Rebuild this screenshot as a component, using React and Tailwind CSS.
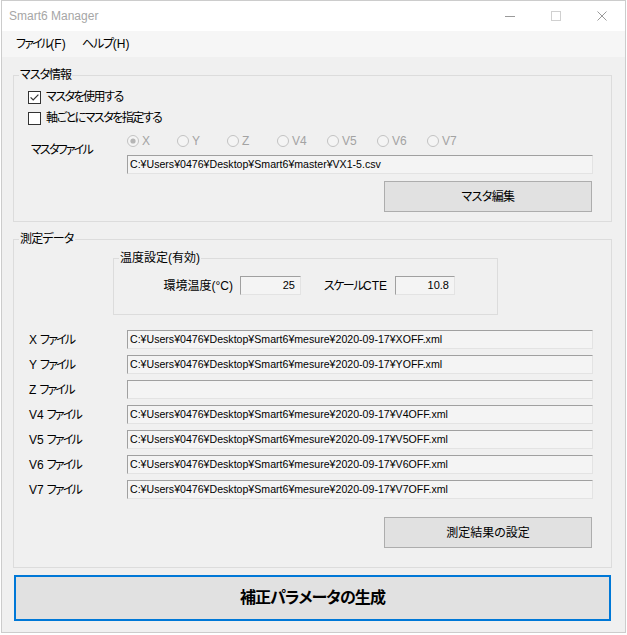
import React from "react";

const FONT = "font-['Liberation_Sans','Noto_Sans_CJK_JP',sans-serif] [font-feature-settings:'palt']";

const base = "C:¥Users¥0476¥Desktop¥Smart6¥mesure¥2020-09-17¥";
const fileRows = [
  { axis: "X", path: base + "XOFF.xml" },
  { axis: "Y", path: base + "YOFF.xml" },
  { axis: "Z", path: "" },
  { axis: "V4", path: base + "V4OFF.xml" },
  { axis: "V5", path: base + "V5OFF.xml" },
  { axis: "V6", path: base + "V6OFF.xml" },
  { axis: "V7", path: base + "V7OFF.xml" },
];

const radios = ["X", "Y", "Z", "V4", "V5", "V6", "V7"];

function CheckBox({ checked }) {
  return (
    <svg width="13" height="13" viewBox="0 0 13 13" className="shrink-0">
      <rect x="0.5" y="0.5" width="12" height="12" fill="#fff" stroke="#333" />
      {checked ? (
        <path d="M2.6 6.4 L5.2 9 L10.4 3.6" fill="none" stroke="#333" strokeWidth="1.2" />
      ) : null}
    </svg>
  );
}

function Radio({ checked }) {
  return (
    <svg width="12" height="12" viewBox="0 0 12 12" className="shrink-0">
      <circle cx="6" cy="6" r="5.5" fill="#f4f4f4" stroke="#c2c2c2" />
      {checked ? <circle cx="6" cy="6" r="2.6" fill="#b5b5b5" /> : null}
    </svg>
  );
}

function TextBox({ value, className = "", align = "left" }) {
  return (
    <div
      className={`flex items-center border-t border-l border-t-[#a0a0a0] border-l-[#a0a0a0] border-b border-r border-b-[#e3e3e3] border-r-[#e3e3e3] bg-[#f4f4f4] text-black whitespace-nowrap overflow-hidden ${
        align === "right" ? "justify-end pr-[5px] text-[11px]" : "pl-[2px] text-[10.6px]"
      } ${className}`}
    >
      {value}
    </div>
  );
}

function Button({ children, className = "" }) {
  return (
    <div
      className={`flex items-center justify-center border border-[#adadad] bg-[#e1e1e1] text-[12px] text-black ${className}`}
    >
      {children}
    </div>
  );
}

function Legend({ children, className = "" }) {
  return (
    <div className={`-mt-[9px] ml-[5px] w-fit bg-[#f0f0f0] px-[1px] text-[12px] leading-[16px] text-black ${className}`}>
      {children}
    </div>
  );
}

export default function App() {
  return (
    <div className={`w-[627px] h-[635px] bg-white ${FONT}`}>
      <div className="ml-[1px] flex h-[633px] w-[625px] flex-col border border-[#cccccc] bg-[#f0f0f0]">
        {/* title bar */}
        <div className="flex h-[30px] items-center bg-white">
          <span className="pl-[7px] text-[12px] text-[#a6a6a6]">Smart6 Manager</span>
          <div className="ml-auto flex h-full">
            <div className="flex w-[46px] items-center justify-center">
              <div className="h-px w-[10px] bg-[#9a9a9a]" />
            </div>
            <div className="flex w-[46px] items-center justify-center">
              <div className="h-[10px] w-[10px] border border-[#d0d0d0]" />
            </div>
            <div className="flex w-[46px] items-center justify-center">
              <svg width="10" height="10" viewBox="0 0 10 10">
                <path d="M0.5 0.5 L9.5 9.5 M9.5 0.5 L0.5 9.5" stroke="#9a9a9a" strokeWidth="1" />
              </svg>
            </div>
          </div>
        </div>

        {/* menu bar */}
        <div className="flex h-[26px] items-center bg-[#f6f6f6] pl-[14px] text-[12px] text-black">
          <span className="w-[66px]">
            <span className="tracking-[-1.8px]">ファイル</span>(F)
          </span>
          <span>
            <span className="tracking-[-1.2px]">ヘルプ</span>(H)
          </span>
        </div>

        {/* body */}
        <div className="flex flex-col pl-[11px]">
          {/* マスタ情報 */}
          <div className="mt-[18px] flex h-[147px] w-[599px] flex-col border border-[#dcdcdc]">
            <Legend className="tracking-[-1px]">マスタ情報</Legend>
            <div className="mt-[6px] ml-[14px] flex h-[16px] items-center gap-[5px] text-[12px]">
              <CheckBox checked />
              <span className="tracking-[-1.5px]">マスタを使用する</span>
            </div>
            <div className="mt-[5px] ml-[14px] flex h-[16px] items-center gap-[5px] text-[12px]">
              <CheckBox />
              <span className="tracking-[-1.5px]">軸ごとにマスタを指定する</span>
            </div>
            <div className="mt-[7px] flex">
              <div className="w-[113px] pl-[17px] pt-[9px] text-[12px] leading-[16px] tracking-[-1.8px]">マスタファイル</div>
              <div className="flex flex-col">
                <div className="flex h-[16px] items-center">
                  {radios.map((r, i) => (
                    <div key={r} className="flex w-[50px] items-center gap-[3px] text-[12px] text-[#a3a3a3]">
                      <Radio checked={i === 0} />
                      <span>{r}</span>
                    </div>
                  ))}
                </div>
                <TextBox
                  className="mt-[6px] h-[19px] w-[466px]"
                  value="C:¥Users¥0476¥Desktop¥Smart6¥master¥VX1-5.csv"
                />
              </div>
            </div>
            <Button className="mt-[7px] ml-[370px] h-[31px] w-[208px] tracking-[-0.6px]">マスタ編集</Button>
          </div>

          {/* 測定データ */}
          <div className="mt-[17px] flex h-[329px] w-[599px] flex-col border border-[#dcdcdc]">
            <Legend className="tracking-[-0.8px]">測定データ</Legend>
            <div className="mt-[11px] ml-[99px] flex h-[57px] w-[385px] flex-col border border-[#dcdcdc]">
              <Legend>温度設定(有効)</Legend>
              <div className="mt-[10px] flex h-[19px] items-center text-[12px]">
                <div className="w-[126px] pr-[7px] text-right">環境温度(°C)</div>
                <TextBox className="h-[19px] w-[61px]" align="right" value="25" />
                <div className="w-[94px] pr-[8px] text-right">
                  <span className="tracking-[-1.5px]">スケール</span>CTE
                </div>
                <TextBox className="h-[19px] w-[60px]" align="right" value="10.8" />
              </div>
            </div>

            <div className="mt-[15px] flex flex-col gap-[6px]">
              {fileRows.map((row) => (
                <div key={row.axis} className="flex h-[19px] items-center">
                  <div className="w-[113px] pl-[15px] text-[12px]">
                    {row.axis}
                    <span className="ml-[3px] tracking-[-1.8px]">ファイル</span>
                  </div>
                  <TextBox className="h-[19px] w-[466px]" value={row.path} />
                </div>
              ))}
            </div>

            <Button className="mt-[18px] ml-[370px] h-[31px] w-[208px]">測定結果の設定</Button>
          </div>

          <div className="mt-[7px] ml-[1px] flex h-[46px] w-[597px] items-center justify-center border-2 border-[#0078d7] bg-[#e1e1e1] text-[16px] font-bold tracking-[-0.9px] text-black">
            補正パラメータの生成
          </div>
        </div>
      </div>
    </div>
  );
}
